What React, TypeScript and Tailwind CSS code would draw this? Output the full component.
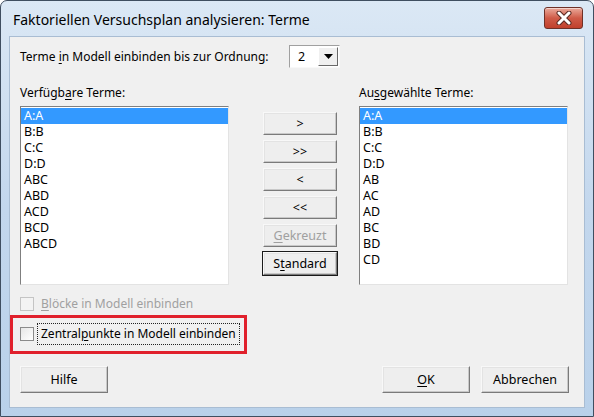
import React from "react";

const font = { fontFamily: '"Noto Sans", "Open Sans", sans-serif' };

function U({ children }: { children: React.ReactNode }) {
  return <span className="underline underline-offset-[2px] decoration-1">{children}</span>;
}

function Btn({
  children,
  w = "w-[74px]",
  h = "h-[23px]",
  disabled = false,
  def = false,
}: {
  children: React.ReactNode;
  w?: string;
  h?: string;
  disabled?: boolean;
  def?: boolean;
}) {
  return (
    <div
      className={`${w} ${h} flex items-center justify-center ${
        def ? "outline outline-1 outline-[#1a1a1a]" : ""
      }`}
    >
      <div
        className={`w-full h-full flex items-center justify-center whitespace-nowrap leading-[16px] bg-[#eeeeee] border-t border-l border-t-[#f8f8f8] border-l-[#f8f8f8] border-r border-b border-r-[#7a7a7a] border-b-[#7a7a7a] shadow-[inset_-1px_-1px_0_#c8c8c8,inset_1px_1px_0_#e3e3e3] text-[12.5px] ${
          disabled ? "text-[#a0a0a0]" : "text-black"
        }`}
      >
        {children}
      </div>
    </div>
  );
}

function ListBox({ items }: { items: string[] }) {
  return (
    <div className="w-[209px] h-[179px] bg-white border-t border-l border-t-[#7f7f7f] border-l-[#7f7f7f] border-r border-b border-r-[#e3e3e3] border-b-[#e3e3e3] pt-[1px]">
      {items.map((it, i) => (
        <div
          key={it}
          className={`h-[16px] leading-[16px] pl-[3px] text-[12.5px] whitespace-nowrap ${
            i === 0 ? "bg-[#3399ff] text-white" : "text-black"
          }`}
        >
          {it}
        </div>
      ))}
    </div>
  );
}

function CheckBox({ disabled = false }: { disabled?: boolean }) {
  return (
    <div
      className={`w-[14px] h-[14px] shrink-0 border ${
        disabled
          ? "border-[#c4c4c4] bg-[#f3f3f3]"
          : "border-[#8a8a8a] bg-gradient-to-br from-[#e6e6e6] to-white"
      }`}
    />
  );
}

export default function App() {
  return (
    <div className="w-[594px] h-[417px] bg-white text-black" style={font}>
      <div className="w-full h-full flex flex-col rounded-t-[7px] border border-[#3f4e60] bg-gradient-to-b from-[#dbe8f5] via-[#c3d7ed] to-[#b9d1ea]">
        {/* Title bar */}
        <div className="h-[35px] flex items-center justify-between pl-[12px] pr-[10px]">
          <div className="text-[14px] text-black leading-[18px] pt-[2px] whitespace-nowrap">
            Faktoriellen Versuchsplan analysieren: Terme
          </div>
          <div className="w-[39px] h-[22px] mt-[-2px] rounded-[3px] border border-[#6e3128] bg-gradient-to-b from-[#e9a99b] via-[#cf5b48] to-[#c0402c] shadow-[inset_0_1px_0_rgba(255,255,255,0.5)] flex items-center justify-center">
            <svg width="16" height="14" viewBox="0 0 16 14">
              <path
                d="M3 2 L13 12 M13 2 L3 12"
                stroke="#5a2a22"
                strokeWidth="5"
                strokeLinecap="round"
              />
              <path
                d="M3 2 L13 12 M13 2 L3 12"
                stroke="#ffffff"
                strokeWidth="3"
                strokeLinecap="round"
              />
            </svg>
          </div>
        </div>

        {/* Client area */}
        <div className="flex-1 mx-[8px] mb-[8px] bg-[#f0f0f0] border border-[#a9bdd3] relative flex flex-col pl-[10px] pr-[15px] pt-[8px] text-[12px] leading-[16px]">
          {/* Row 1 */}
          <div className="h-[23px] flex items-center">
            <div className="w-[269px] whitespace-nowrap">
              Terme <U>i</U>n Modell einbinden bis zur Ordnung:
            </div>
            <div className="w-[51px] h-[23px] bg-white border-t border-l border-t-[#a0a0a0] border-l-[#a0a0a0] border-r border-b border-r-[#f8f8f8] border-b-[#f8f8f8] flex items-center">
              <div className="flex-1 pl-[8px] text-[12.5px]">2</div>
              <div className="w-[20px] h-[19px] mr-[1px] bg-[#f0f0f0] border-t border-l border-t-white border-l-white border-r border-b border-r-[#696969] border-b-[#696969] flex items-center justify-center">
                <svg width="9" height="5" viewBox="0 0 9 5">
                  <path d="M0 0 H9 L4.5 5 Z" fill="#000" />
                </svg>
              </div>
            </div>
          </div>

          {/* Row 2: labels */}
          <div className="h-[16px] mt-[17px] flex items-center">
            <div className="w-[339px] whitespace-nowrap">
              Verfügb<U>a</U>re Terme:
            </div>
            <div className="whitespace-nowrap">
              Au<U>s</U>gewählte Terme:
            </div>
          </div>

          {/* Row 3: lists and buttons */}
          <div className="mt-[5px] flex">
            <ListBox
              items={["A:A", "B:B", "C:C", "D:D", "ABC", "ABD", "ACD", "BCD", "ABCD"]}
            />
            <div className="ml-[34px] pt-[6px] flex flex-col gap-[5px]">
              <Btn>&gt;</Btn>
              <Btn>&gt;&gt;</Btn>
              <Btn>&lt;</Btn>
              <Btn>&lt;&lt;</Btn>
              <Btn disabled>
                <U>G</U>ekreuzt
              </Btn>
              <Btn def>
                S<U>t</U>andard
              </Btn>
            </div>
            <div className="ml-[22px]">
              <ListBox
                items={["A:A", "B:B", "C:C", "D:D", "AB", "AC", "AD", "BC", "BD", "CD"]}
              />
            </div>
          </div>

          {/* Checkboxes */}
          <div className="mt-[11px] h-[16px] flex items-center text-[#a0a0a0]">
            <CheckBox disabled />
            <div className="ml-[7px] whitespace-nowrap">
              <U>B</U>löcke in Modell einbinden
            </div>
          </div>
          <div className="mt-[14px] h-[16px] flex items-center">
            <CheckBox />
            <div className="ml-[6px] px-[1px] whitespace-nowrap outline outline-1 outline-dotted outline-[#222] outline-offset-[2px]">
              Zentral<U>p</U>unkte in Modell einbinden
            </div>
          </div>

          {/* Bottom buttons */}
          <div className="mt-[24px] flex items-center">
            <Btn w="w-[88px]" h="h-[27px]">
              Hilfe
            </Btn>
            <div className="flex-1" />
            <Btn w="w-[88px]" h="h-[27px]">
              <U>O</U>K
            </Btn>
            <div className="w-[11px]" />
            <Btn w="w-[88px]" h="h-[27px]">
              Abbrechen
            </Btn>
          </div>

          {/* Red annotation rectangle */}
          <div className="absolute left-0 top-[278px] w-[237px] h-[39px] border-[3px] border-[#e0202c] pointer-events-none" />
        </div>
      </div>
    </div>
  );
}
